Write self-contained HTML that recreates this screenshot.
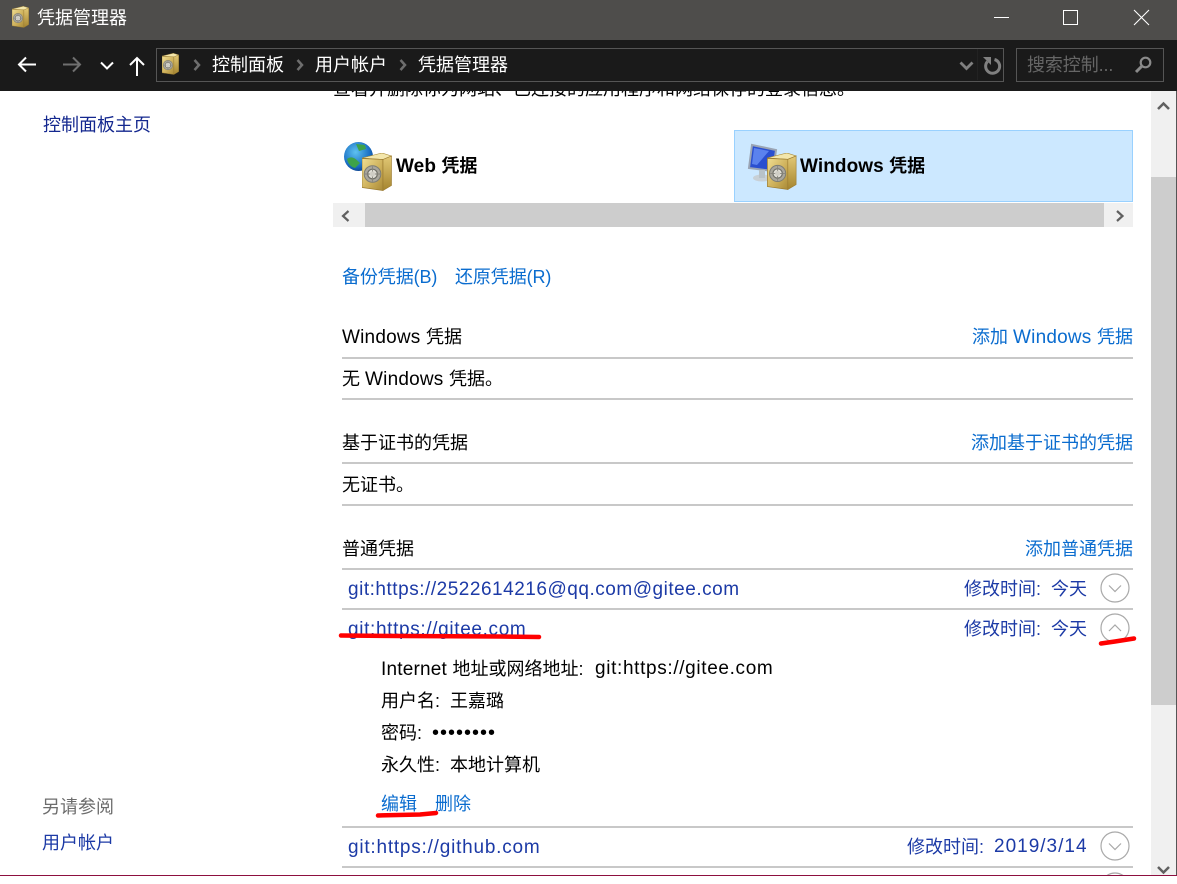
<!DOCTYPE html>
<html lang="zh-CN"><head><meta charset="utf-8"><title>凭据管理器</title>
<style>
html,body{margin:0;padding:0;background:#fff}
#p{position:relative;width:1177px;height:884px;overflow:hidden;background:#fff;font-family:"Liberation Sans","Noto Sans CJK SC",sans-serif;font-size:18px;color:#000}
#p div{position:absolute}
.t{position:absolute;line-height:24px;height:24px;white-space:nowrap}
.l{color:#0a6ccf}.n{color:#1c3aa6}
.w{font-size:19px;letter-spacing:.2px}
.wb{font-size:19px;letter-spacing:.08px}
.u{font-size:19px;letter-spacing:.6px}
.hr{position:absolute;left:342px;width:791px;height:2px;background:#c8c8c8}
svg{position:absolute;overflow:visible}
</style></head><body><div id="p">
<svg width="0" height="0" style="position:absolute"><defs>
<linearGradient id="v" x1="0" y1="0" x2="1" y2="1"><stop offset="0" stop-color="#efdd92"/><stop offset=".55" stop-color="#cfb25c"/><stop offset="1" stop-color="#a98a37"/></linearGradient>
<linearGradient id="vs" x1="0" y1="0" x2="0" y2="1"><stop offset="0" stop-color="#e2c875"/><stop offset="1" stop-color="#a5852f"/></linearGradient>
<radialGradient id="gl" cx=".4" cy=".35" r=".7"><stop offset="0" stop-color="#5ec2f0"/><stop offset=".7" stop-color="#1a6fc4"/><stop offset="1" stop-color="#0d3f8a"/></radialGradient>
<symbol id="vault" viewBox="0 0 30 38">
<path d="M0 5L20 0 29.500 3 21 6.500Z" fill="#f3e6ab" stroke="#a5852f" stroke-width=".6"/>
<path d="M0 5.500L21 6.500V37.500L0 34.500Z" fill="url(#v)" stroke="#9a7a30" stroke-width=".7"/>
<path d="M21 6.500L29.500 3V32.500L21 37.500Z" fill="url(#vs)" stroke="#9a7a30" stroke-width=".6"/>
<circle cx="10.500" cy="21" r="8.300" fill="#a9a69c" stroke="#7c7c74" stroke-width="1"/><circle cx="10.500" cy="21" r="4.800" fill="#e2e0d8" stroke="#6f6f68" stroke-width="1.200"/><path d="M10.500 13.500v15M3 21h15" stroke="#85837a" stroke-width=".9"/><circle cx="10.500" cy="21" r="2.600" fill="#cfcdc5"/>
</symbol>
<symbol id="chev" viewBox="0 0 30 30"><circle cx="15" cy="15" r="14" fill="#fff" stroke="#a9a9a9" stroke-width="1.200"/><path d="M9 12.500l6 6 6-6" fill="none" stroke="#a8a8a8" stroke-width="1.200"/></symbol>
<symbol id="chevu" viewBox="0 0 30 30"><circle cx="15" cy="15" r="14" fill="#fff" stroke="#a9a9a9" stroke-width="1.200"/><path d="M9 18l6-6 6 6" fill="none" stroke="#a8a8a8" stroke-width="1.200"/></symbol>
</defs></svg>

<!-- clipped intro (beneath nav bar) -->
<span class="t" style="left:333px;top:77px">查看并删除你为网站、已连接的应用程序和网络保存的登录信息。</span>

<!-- title bar -->
<div style="left:0;top:0;width:1177px;height:40px;background:#4e4d4b"></div>
<svg style="left:12px;top:6px" width="17" height="22"><use href="#vault" width="17" height="22"/></svg>
<span class="t" style="left:37px;top:6px;color:#fff;">凭据管理器</span>
<div style="left:994px;top:17px;width:15px;height:1px;background:#fff"></div>
<div style="left:1063px;top:10px;width:13px;height:13px;border:1px solid #fff"></div>
<svg style="left:1134px;top:10px" width="15" height="15"><path d="M0 0L15 15M15 0L0 15" stroke="#fff" stroke-width="1.100"/></svg>

<!-- nav bar -->
<div style="left:0;top:40px;width:1177px;height:51px;background:#1a1a1a"></div>
<svg style="left:17px;top:56px" width="20" height="17"><path d="M19 8.500H2M9 1.500L2 8.500l7 7" fill="none" stroke="#fff" stroke-width="2"/></svg>
<svg style="left:62px;top:56px" width="20" height="17"><path d="M1 8.500H18M11 1.500l7 7-7 7" fill="none" stroke="#6f6f6f" stroke-width="2"/></svg>
<svg style="left:100px;top:61px" width="14" height="9"><path d="M1 1.500l6 6 6-6" fill="none" stroke="#fff" stroke-width="2"/></svg>
<svg style="left:129px;top:56px" width="16" height="20"><path d="M8 20V2M1 9l7-7 7 7" fill="none" stroke="#fff" stroke-width="2"/></svg>
<div style="left:156px;top:48px;width:846px;height:32px;border:1px solid #555"></div>
<svg style="left:162px;top:53px" width="17" height="22"><use href="#vault" width="17" height="22"/></svg>
<svg style="left:193px;top:59px" width="8" height="12"><path d="M1.500 1l4.500 5-4.500 5" fill="none" stroke="#6e6e6e" stroke-width="2.500"/></svg>
<span class="t" style="left:212px;top:53px;color:#fff">控制面板</span>
<svg style="left:296px;top:59px" width="8" height="12"><path d="M1.500 1l4.500 5-4.500 5" fill="none" stroke="#6e6e6e" stroke-width="2.500"/></svg>
<span class="t" style="left:315px;top:53px;color:#fff">用户帐户</span>
<svg style="left:399px;top:59px" width="8" height="12"><path d="M1.500 1l4.500 5-4.500 5" fill="none" stroke="#6e6e6e" stroke-width="2.500"/></svg>
<span class="t" style="left:418px;top:53px;color:#fff">凭据管理器</span>
<svg style="left:959px;top:61px" width="15" height="10"><path d="M1.500 1.500l6 6 6-6" fill="none" stroke="#808080" stroke-width="2.800"/></svg>
<div style="left:977px;top:49px;width:1px;height:31px;background:#222"></div>
<svg style="left:983px;top:57px" width="18" height="18"><path d="M11.500 2.500A7 7 0 1 1 4.500 4.500" fill="none" stroke="#808080" stroke-width="3"/><path d="M0 0h8v8z" fill="#808080"/></svg>
<div style="left:1016px;top:48px;width:146px;height:32px;border:1px solid #555"></div>
<span class="t" style="left:1027px;top:53px;color:#666;letter-spacing:-.1px">搜索控制...</span>
<svg style="left:1134px;top:56px" width="18" height="18"><circle cx="11.500" cy="6.500" r="4.800" fill="none" stroke="#8a8a8a" stroke-width="2.200"/><path d="M8 10L2 16" stroke="#8a8a8a" stroke-width="3"/></svg>

<!-- sidebar -->
<span class="t" style="left:43px;top:113px;color:#14288f">控制面板主页</span>
<span class="t" style="left:42px;top:795px;color:#6d6d6d">另请参阅</span>
<span class="t" style="left:42px;top:831px;color:#1c3aa6">用户帐户</span>

<!-- tabs -->
<div style="left:734px;top:130px;width:397px;height:70px;background:#cce8ff;border:1px solid #99d1ff"></div>
<svg style="left:344px;top:141px" width="29" height="31"><circle cx="14.500" cy="15.500" r="14.500" fill="url(#gl)"/><path d="M3 18c5-4 9 0 13 4l-5 5c-4-1-7-4-8-9zM12 3l9 1 1 4-7 2z" fill="#3ea24a"/></svg>
<svg style="left:362px;top:153px" width="30" height="38"><use href="#vault" width="30" height="38"/></svg>
<span class="t" style="left:396px;top:154px;font-weight:bold"><span class="wb">Web </span>凭据</span>
<svg style="left:749px;top:144px" width="30" height="38"><path d="M3 1L27 6 24 27 0 24Z" fill="#2a4fd0" stroke="#9aa4b4" stroke-width="2"/><path d="M5 4L20 7 8 21 3 20Z" fill="#5b82ee"/><ellipse cx="13" cy="34" rx="9" ry="3.500" fill="#c8d0d6"/><rect x="10" y="26" width="6" height="8" fill="#b8c2c8"/></svg>
<svg style="left:767px;top:153px" width="30" height="37"><use href="#vault" width="30" height="37"/></svg>
<span class="t" style="left:800px;top:154px;font-weight:bold"><span class="wb">Windows </span>凭据</span>

<!-- h scrollbar -->
<div style="left:333px;top:203px;width:800px;height:24px;background:#f0f0f0"></div>
<div style="left:365px;top:203px;width:739px;height:24px;background:#cdcdcd"></div>
<svg style="left:341px;top:210px" width="10" height="12"><path d="M7.500 1L2 6l5.500 5" fill="none" stroke="#606060" stroke-width="2.200"/></svg>
<svg style="left:1115px;top:210px" width="10" height="12"><path d="M2 1l5.500 5L2 11" fill="none" stroke="#606060" stroke-width="2.200"/></svg>

<!-- v scrollbar -->
<div style="left:1151px;top:91px;width:25px;height:784px;background:#f0f0f0"></div>
<div style="left:1151px;top:177px;width:25px;height:528px;background:#cdcdcd"></div>
<div style="left:1176px;top:91px;width:1px;height:785px;background:#555"></div>
<svg style="left:1157px;top:101px" width="13" height="10"><path d="M1 8l5.500-5.500L12 8" fill="none" stroke="#606060" stroke-width="2.500"/></svg>
<svg style="left:1157px;top:866px" width="13" height="9"><path d="M1 1l5.500 5.500L12 1" fill="none" stroke="#606060" stroke-width="2.500"/></svg>

<!-- content -->
<span class="t l" style="left:342px;top:265px;letter-spacing:-.1px">备份凭据(B)</span>
<span class="t l" style="left:455px;top:265px;letter-spacing:-.1px">还原凭据(R)</span>

<span class="t" style="left:342px;top:325px"><span class="w">Windows </span>凭据</span>
<span class="t l" style="right:44px;top:325px">添加 <span class="w">Windows </span>凭据</span>
<div class="hr" style="top:357px"></div>
<span class="t" style="left:342px;top:367px">无 <span class="w">Windows </span>凭据。</span>
<div class="hr" style="top:398px"></div>

<span class="t" style="left:342px;top:431px">基于证书的凭据</span>
<span class="t l" style="right:44px;top:431px">添加基于证书的凭据</span>
<div class="hr" style="top:462px"></div>
<span class="t" style="left:342px;top:473px">无证书。</span>
<div class="hr" style="top:504px"></div>

<span class="t" style="left:342px;top:537px">普通凭据</span>
<span class="t l" style="right:44px;top:537px">添加普通凭据</span>
<div class="hr" style="top:568px"></div>

<span class="t n u" style="left:348px;top:578px;letter-spacing:.52px">git:https://2522614216@qq.com@gitee.com</span>
<span class="t n" style="left:964px;top:577px">修改时间:</span>
<span class="t n" style="left:1051px;top:577px">今天</span>
<svg style="left:1100px;top:573px" width="30" height="30"><use href="#chev" width="30" height="30"/></svg>
<div class="hr" style="top:608px"></div>

<span class="t n u" style="left:348px;top:618px;letter-spacing:.65px">git:https://gitee.com</span>
<span class="t n" style="left:964px;top:617px">修改时间:</span>
<span class="t n" style="left:1051px;top:617px">今天</span>
<svg style="left:1100px;top:613px" width="30" height="30"><use href="#chevu" width="30" height="30"/></svg>

<span class="t" style="left:381px;top:657px"><span class="w">Internet </span>地址或网络地址:</span>
<span class="t u" style="left:595px;top:657px;letter-spacing:.65px">git:https://gitee.com</span>
<span class="t" style="left:381px;top:689px">用户名:</span>
<span class="t" style="left:450px;top:689px">王嘉璐</span>
<span class="t" style="left:381px;top:721px">密码:</span>
<span class="t" style="left:432px;top:721px;letter-spacing:1px;font-size:20px">••••••••</span>
<span class="t" style="left:381px;top:753px">永久性:</span>
<span class="t" style="left:450px;top:753px">本地计算机</span>
<span class="t l" style="left:381px;top:792px">编辑</span>
<span class="t l" style="left:435px;top:792px">删除</span>
<div class="hr" style="top:826px"></div>

<span class="t n u" style="left:348px;top:836px;letter-spacing:.78px">git:https://github.com</span>
<span class="t n" style="left:907px;top:835px">修改时间:</span>
<span class="t n" style="left:994px;top:835px;font-size:19px;letter-spacing:1px">2019/3/14</span>
<svg style="left:1100px;top:831px" width="30" height="30"><use href="#chev" width="30" height="30"/></svg>
<div class="hr" style="top:866px"></div>
<svg style="left:1100px;top:872px;clip-path:inset(0 0 27px 0)" width="30" height="30"><use href="#chev" width="30" height="30"/></svg>

<!-- red annotations -->
<svg style="left:0;top:0" width="1177" height="884"><g fill="none" stroke="#f00" stroke-width="4.500" stroke-linecap="round"><path d="M341 635.500L400 636 500 636.500 539 637"/><path d="M378 815.500L420 814.500 436 813"/><path d="M1101 643.500L1115 641.500 1134 638.500"/></g></svg>

<!-- bottom edge -->
<div style="left:0;top:875px;width:1177px;height:1px;background:#8d0f3f"></div>
<div style="left:0;top:876px;width:1177px;height:8px;background:#fff"></div>
</div></body></html>
